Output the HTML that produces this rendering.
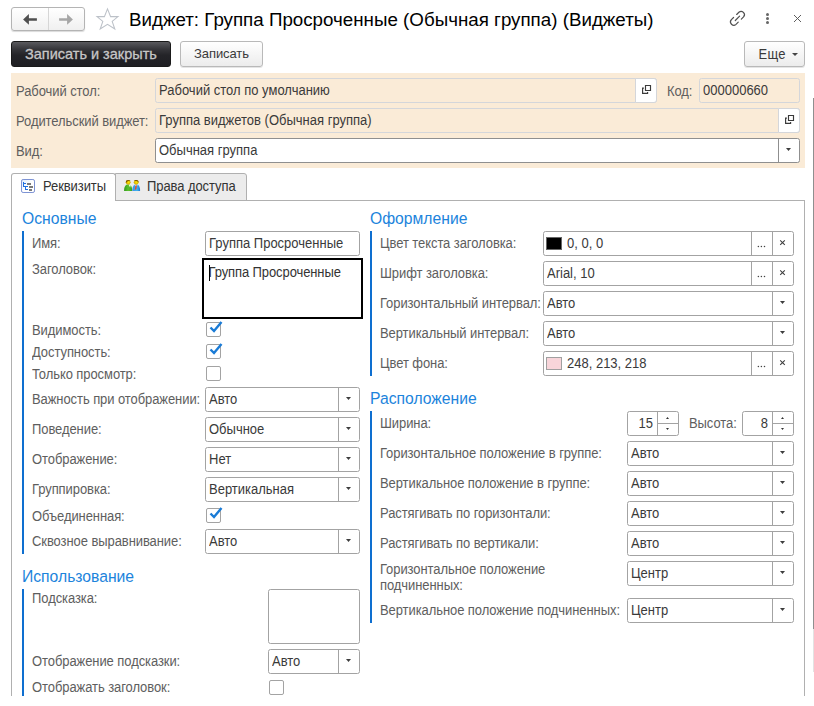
<!DOCTYPE html>
<html><head><meta charset="utf-8">
<style>
*{box-sizing:border-box;margin:0;padding:0}
html,body{width:814px;height:706px;overflow:hidden;background:#fff}
body{position:relative;font-family:"Liberation Sans",sans-serif;font-size:13px;color:#4d4d4d}
.a{position:absolute}
.t{position:absolute;white-space:nowrap;line-height:16px;letter-spacing:-0.08px;transform:scaleY(1.1);transform-origin:0 12.5px}
.lbl{color:#5e5e5e;margin-top:1px}
.fld{position:absolute;border:1px solid #a3a3a3;border-radius:2.5px;background:#fff;height:25px}
.fld .v{position:absolute;left:3px;top:4px;line-height:16px;color:#3a3a3a;white-space:nowrap;letter-spacing:0;transform:scaleY(1.1);transform-origin:0 12.5px}
.dd{position:absolute;top:-1px;bottom:-1px;right:-1px;width:22px;border-left:1px solid #a3a3a3}
.dd:after{content:"";position:absolute;left:7px;top:10px;width:5px;height:3px;background:#3d3d3d;clip-path:polygon(0 0,100% 0,50% 100%)}
.cb{position:absolute;width:15px;height:15px;border:1px solid #a3a3a3;border-radius:2px;background:#fff}
.cb svg{position:absolute;left:2px;top:-2px}
.hd{position:absolute;white-space:nowrap;font-size:15.7px;color:#1c84dc;line-height:18px;margin-top:1.7px;transform:scaleY(1.08);transform-origin:0 14.4px}
.bar{position:absolute;width:2px;background:#0e6fd0}
</style></head><body>

<!-- nav buttons -->
<div class="a" style="left:11px;top:7px;width:74px;height:24px;border:1px solid #b4b4b4;border-radius:3px;background:linear-gradient(#fff,#f0f0f0);box-shadow:0 1px 1px rgba(0,0,0,0.15)"></div>
<div class="a" style="left:48px;top:8px;width:1px;height:22px;background:#d6d6d6"></div>
<svg class="a" style="left:22px;top:13px" width="16" height="14" viewBox="0 0 16 14"><path d="M1.1 6.4 L6.9 1 L6.9 5.2 L14.9 5.2 L14.9 7.7 L6.9 7.7 L6.9 11.8 Z" fill="#4f4f4f"/></svg>
<svg class="a" style="left:58px;top:13px" width="16" height="14" viewBox="0 0 16 14"><path d="M14.9 6.4 L9.1 1 L9.1 5.2 L1.1 5.2 L1.1 7.7 L9.1 7.7 L9.1 11.8 Z" fill="#a6a6a6"/></svg>
<!-- star -->
<svg class="a" style="left:92px;top:4px" width="32" height="30" viewBox="92 4 32 30"><path d="M107.5 8.9 L110.6 16.6 L118.0 16.6 L112.2 21.4 L114.8 29 L107.5 24.4 L100.2 29 L102.8 21.4 L97.0 16.6 L104.4 16.6 Z" fill="none" stroke="#bcc1c8" stroke-width="1.05" stroke-linejoin="miter"/></svg>
<div class="t" style="left:129px;top:9px;font-size:18.75px;line-height:22px;color:#000;letter-spacing:0;transform:none">Виджет: Группа Просроченные (Обычная группа) (Виджеты)</div>
<!-- link icon -->
<svg class="a" style="left:726px;top:6px" width="24" height="24" viewBox="0 0 24 24"><g fill="none" stroke="#505050" stroke-width="1.2" stroke-linecap="round"><path d="M10.67 8.47 L12.87 6.27 A3.3 3.3 0 0 1 17.53 10.93 L15.33 13.13"/><path d="M12.23 16.13 L10.03 18.33 A3.3 3.3 0 0 1 5.37 13.67 L7.57 11.47"/><path d="M9.3 14.5 L13.6 10.2"/></g></svg>
<div class="a" style="left:766px;top:13px;width:3px;height:3px;border-radius:2px;background:#666"></div>
<div class="a" style="left:766px;top:17px;width:3px;height:3px;border-radius:2px;background:#666"></div>
<div class="a" style="left:766px;top:21px;width:3px;height:3px;border-radius:2px;background:#666"></div>
<svg class="a" style="left:793px;top:14px" width="9" height="9" viewBox="0 0 9 9"><path d="M1 1 L8 8 M8 1 L1 8" stroke="#555" stroke-width="0.95"/></svg>

<!-- toolbar -->
<div class="a" style="left:11px;top:41px;width:160px;height:26px;border:1px solid #1a1a1a;border-radius:3px;background:linear-gradient(#5a5a5e,#36363a 30%,#242428 55%,#1f1f23)"></div>
<div class="t" style="left:25px;top:46px;font-size:14.5px;color:#c6c6c6;letter-spacing:0;-webkit-text-stroke:0.3px #c6c6c6;transform:none;top:46px">Записать и закрыть</div>
<div class="a" style="left:180px;top:41px;width:83px;height:26px;border:1px solid #b9b9b9;border-radius:3px;background:linear-gradient(#fff,#ececec);box-shadow:0 1px 0 rgba(0,0,0,0.1)"></div>
<div class="t" style="left:194px;top:46px;color:#3a3a3a;transform:none">Записать</div>
<div class="a" style="left:744px;top:41px;width:61px;height:26px;border:1px solid #b9b9b9;border-radius:3px;background:linear-gradient(#fff,#ececec);box-shadow:0 1px 0 rgba(0,0,0,0.1)"></div>
<div class="t" style="left:758.5px;top:46.5px;color:#3a3a3a;letter-spacing:0.3px">Еще</div>
<div class="a" style="left:792px;top:53px;border-left:3px solid transparent;border-right:3px solid transparent;border-top:3px solid #444"></div>

<!-- header panel -->
<div class="a" style="left:11px;top:73px;width:794px;height:95px;background:#faebd7"></div>
<div class="t lbl" style="left:16px;top:83px">Рабочий стол:</div>
<div class="fld" style="left:155px;top:78px;width:502px;background:#faebd7;border-color:#d4d6da"><div class="v">Рабочий стол по умолчанию</div>
  <div class="a" style="right:-1px;top:-1px;bottom:-1px;width:22px;background:#fff;border:1px solid #d4d6da;border-radius:0 3px 3px 0"></div></div>
<svg class="a" style="left:641px;top:84px" width="12" height="12" viewBox="0 0 12 12"><g fill="none" stroke="#3a3a3a" stroke-width="1.15"><path d="M4.5 1.5 H9.5 V6.5 H4.5 Z"/><path d="M2.9 4.1 H1.6 V9.4 H6.6 V8.1"/></g></svg>
<div class="t lbl" style="left:667px;top:83px">Код:</div>
<div class="fld" style="left:699px;top:78px;width:101px;background:#faebd7;border-color:#d4d6da"><div class="v">000000660</div></div>

<div class="t lbl" style="left:16px;top:113px">Родительский виджет:</div>
<div class="fld" style="left:155px;top:108px;width:645px;background:#faebd7;border-color:#d4d6da"><div class="v">Группа виджетов (Обычная группа)</div>
  <div class="a" style="right:-1px;top:-1px;bottom:-1px;width:22px;background:#fff;border:1px solid #d4d6da;border-radius:0 3px 3px 0"></div></div>
<svg class="a" style="left:784px;top:114px" width="12" height="12" viewBox="0 0 12 12"><g fill="none" stroke="#3a3a3a" stroke-width="1.15"><path d="M4.5 1.5 H9.5 V6.5 H4.5 Z"/><path d="M2.9 4.1 H1.6 V9.4 H6.6 V8.1"/></g></svg>

<div class="t lbl" style="left:16px;top:143px">Вид:</div>
<div class="fld" style="left:155px;top:138px;width:645px;border-color:#8f8f8f"><div class="v">Обычная группа</div><div class="dd" style="border-color:#8f8f8f"></div></div>

<!-- tabs -->
<div class="a" style="left:115px;top:173px;width:132px;height:28px;background:#ececec;border:1px solid #b0b0b0;border-radius:0 3px 0 0"></div>
<div class="a" style="left:11px;top:200px;width:794px;height:496px;border:1px solid #b0b0b0;border-bottom:none"></div>
<div class="a" style="left:11px;top:173px;width:105px;height:28px;background:#fff;border:1px solid #b0b0b0;border-bottom:none;border-radius:3px 3px 0 0"></div>
<svg class="a" style="left:18px;top:176px" width="20" height="20" viewBox="18 176 20 20"><defs><linearGradient id="g1" x1="0" y1="0" x2="1" y2="1"><stop offset="0" stop-color="#dce9fb"/><stop offset="0.5" stop-color="#fff"/></linearGradient></defs><rect x="21.5" y="179.5" width="13" height="13" rx="1.6" fill="url(#g1)" stroke="#7d93d4"/><g fill="#1f6fe0"><rect x="23" y="182" width="1" height="5"/><rect x="23" y="183" width="3" height="1"/><rect x="23" y="186" width="5" height="1"/><rect x="25" y="186" width="1" height="4"/><rect x="25" y="189" width="3" height="1"/></g><g fill="#7a7a7a"><rect x="27" y="183" width="4" height="2"/><rect x="29" y="186" width="4" height="2"/><rect x="29" y="189" width="3" height="2"/></g></svg>
<div class="t" style="left:43px;top:179px;color:#333">Реквизиты</div>
<svg class="a" style="left:120px;top:176px" width="24" height="20" viewBox="120 176 24 20"><defs><linearGradient id="gg" x1="0" y1="0" x2="1" y2="0"><stop offset="0" stop-color="#2f9a1c"/><stop offset="0.5" stop-color="#5cc02e"/><stop offset="1" stop-color="#3aa020"/></linearGradient><linearGradient id="gb" x1="0" y1="0" x2="1" y2="0"><stop offset="0" stop-color="#3a8fe8"/><stop offset="0.6" stop-color="#3fb6ee"/><stop offset="1" stop-color="#1f6fd6"/></linearGradient><radialGradient id="gh" cx="0.55" cy="0.5" r="0.6"><stop offset="0" stop-color="#ffe800"/><stop offset="1" stop-color="#c99a00"/></radialGradient></defs>
<path d="M124.1 191 C123.9 186.4 125.8 184.5 128.2 184.5 C130.6 184.5 132.3 186.4 132.2 191 Z" fill="url(#gg)"/><path d="M128.6 184.8 L130.8 184.8 L130.1 187.6 Z" fill="#efffd8"/>
<path d="M132.3 191 C132.2 186.4 133.9 184.5 136.2 184.5 C138.5 184.5 140.2 186.4 140.1 191 Z" fill="url(#gb)"/><path d="M134.4 184.7 L138 184.7 L136.2 186.6 Z" fill="#eaf6ff"/><path d="M135.7 185.2 L136.9 185.3 L136.3 189 L134.8 190 Z" fill="#ff3c12"/>
<circle cx="128.2" cy="182.3" r="2.4" fill="url(#gh)"/><path d="M125.9 182.5 C125.6 180.5 127 179.9 128.4 179.9 C129.6 179.9 130.5 180.5 130.6 181 C129.5 180.7 127.2 180.8 126.4 182.8 Z" fill="#7a5200"/>
<circle cx="136.2" cy="182.3" r="2.4" fill="url(#gh)"/><path d="M134 181 C134.5 180.2 135.5 179.9 136.4 179.9 C137.8 179.9 138.8 180.8 138.6 182.6 C138.1 181.2 137 180.7 134 181 Z" fill="#7a5200"/></svg>
<div class="t" style="left:147px;top:179px;color:#333">Права доступа</div>

<!-- ОСНОВНЫЕ -->
<div class="hd" style="left:22px;top:208px">Основные</div>
<div class="bar" style="left:22px;top:231px;height:323px"></div>
<div class="t lbl" style="left:32px;top:235px">Имя:</div>
<div class="fld" style="left:205px;top:231px;width:155px;height:25px"><div class="v">Группа Просроченные</div></div>
<div class="t lbl" style="left:32px;top:261px">Заголовок:</div>
<div class="a" style="left:202px;top:258px;width:161px;height:61px;border:2px solid #000"></div>
<div class="t" style="left:208.5px;top:265px;color:#333;letter-spacing:-0.1px">Группа Просроченные</div>
<div class="a" style="left:209px;top:265px;width:1px;height:16px;background:#000"></div>

<div class="t lbl" style="left:32px;top:322px">Видимость:</div>
<div class="cb" style="left:206px;top:322px"><svg width="14" height="13" viewBox="0 0 14 13"><path d="M1.5 6.5 L5 10 L12.5 1" fill="none" stroke="#1a7bd6" stroke-width="2.4"/></svg></div>
<div class="t lbl" style="left:32px;top:344px">Доступность:</div>
<div class="cb" style="left:206px;top:344px"><svg width="14" height="13" viewBox="0 0 14 13"><path d="M1.5 6.5 L5 10 L12.5 1" fill="none" stroke="#1a7bd6" stroke-width="2.4"/></svg></div>
<div class="t lbl" style="left:32px;top:366px">Только просмотр:</div>
<div class="cb" style="left:206px;top:366px"></div>

<div class="t lbl" style="left:32px;top:391px">Важность при отображении:</div>
<div class="fld" style="left:205px;top:387px;width:155px"><div class="v">Авто</div><div class="dd"></div></div>
<div class="t lbl" style="left:32px;top:421px">Поведение:</div>
<div class="fld" style="left:205px;top:417px;width:155px"><div class="v">Обычное</div><div class="dd"></div></div>
<div class="t lbl" style="left:32px;top:451px">Отображение:</div>
<div class="fld" style="left:205px;top:447px;width:155px"><div class="v">Нет</div><div class="dd"></div></div>
<div class="t lbl" style="left:32px;top:481px">Группировка:</div>
<div class="fld" style="left:205px;top:477px;width:155px"><div class="v">Вертикальная</div><div class="dd"></div></div>
<div class="t lbl" style="left:32px;top:508px">Объединенная:</div>
<div class="cb" style="left:206px;top:508px"><svg width="14" height="13" viewBox="0 0 14 13"><path d="M1.5 6.5 L5 10 L12.5 1" fill="none" stroke="#1a7bd6" stroke-width="2.4"/></svg></div>
<div class="t lbl" style="left:32px;top:533px">Сквозное выравнивание:</div>
<div class="fld" style="left:205px;top:529px;width:155px"><div class="v">Авто</div><div class="dd"></div></div>

<!-- ИСПОЛЬЗОВАНИЕ -->
<div class="hd" style="left:22px;top:566px">Использование</div>
<div class="bar" style="left:22px;top:589px;height:107px"></div>
<div class="t lbl" style="left:32px;top:590px">Подсказка:</div>
<div class="fld" style="left:268px;top:589px;width:92px;height:55px"></div>
<div class="t lbl" style="left:32px;top:653px">Отображение подсказки:</div>
<div class="fld" style="left:268px;top:649px;width:92px"><div class="v">Авто</div><div class="dd"></div></div>
<div class="t lbl" style="left:32px;top:679px">Отображать заголовок:</div>
<div class="cb" style="left:269px;top:680px"></div>

<!-- ОФОРМЛЕНИЕ -->
<div class="hd" style="left:370px;top:208px">Оформление</div>
<div class="bar" style="left:370px;top:231px;height:145px"></div>
<div class="t lbl" style="left:380px;top:235px">Цвет текста заголовка:</div>
<div class="fld" style="left:543px;top:231px;width:251px"><div class="a" style="left:2px;top:5px;width:16px;height:13px;background:#000;border:1px solid #666"></div><div class="v" style="left:23px">0, 0, 0</div>
  <div class="a" style="left:207px;top:-1px;width:1px;height:25px;background:#a3a3a3"></div><svg class="a" style="left:212px;top:12px" width="10" height="4" viewBox="0 0 10 4"><g fill="#444"><circle cx="2.4" cy="2.4" r="0.75"/><circle cx="5.4" cy="2.4" r="0.75"/><circle cx="8.5" cy="2.4" r="0.75"/></g></svg>
  <div class="a" style="left:228px;top:-1px;width:1px;height:25px;background:#a3a3a3"></div></div>
<div class="t lbl" style="left:380px;top:265px">Шрифт заголовка:</div>
<div class="fld" style="left:543px;top:261px;width:251px"><div class="v">Arial, 10</div>
  <div class="a" style="left:207px;top:-1px;width:1px;height:25px;background:#a3a3a3"></div><svg class="a" style="left:212px;top:12px" width="10" height="4" viewBox="0 0 10 4"><g fill="#444"><circle cx="2.4" cy="2.4" r="0.75"/><circle cx="5.4" cy="2.4" r="0.75"/><circle cx="8.5" cy="2.4" r="0.75"/></g></svg>
  <div class="a" style="left:228px;top:-1px;width:1px;height:25px;background:#a3a3a3"></div></div>
<div class="t lbl" style="left:380px;top:295px">Горизонтальный интервал:</div>
<div class="fld" style="left:543px;top:291px;width:251px"><div class="v">Авто</div><div class="dd"></div></div>
<div class="t lbl" style="left:380px;top:325px">Вертикальный интервал:</div>
<div class="fld" style="left:543px;top:321px;width:251px"><div class="v">Авто</div><div class="dd"></div></div>
<div class="t lbl" style="left:380px;top:355px">Цвет фона:</div>
<div class="fld" style="left:543px;top:351px;width:251px"><div class="a" style="left:2px;top:5px;width:16px;height:13px;background:#f8d5da;border:1px solid #a0a0a0"></div><div class="v" style="left:23px">248, 213, 218</div>
  <div class="a" style="left:207px;top:-1px;width:1px;height:25px;background:#a3a3a3"></div><svg class="a" style="left:212px;top:12px" width="10" height="4" viewBox="0 0 10 4"><g fill="#444"><circle cx="2.4" cy="2.4" r="0.75"/><circle cx="5.4" cy="2.4" r="0.75"/><circle cx="8.5" cy="2.4" r="0.75"/></g></svg>
  <div class="a" style="left:228px;top:-1px;width:1px;height:25px;background:#a3a3a3"></div></div>
<svg class="a" style="left:779px;top:239px" width="8" height="8" viewBox="0 0 8 8"><path d="M1.2 1.3 L5.8 5.9 M5.8 1.3 L1.2 5.9" stroke="#3d3d3d" stroke-width="1.05"/></svg>
<svg class="a" style="left:779px;top:269px" width="8" height="8" viewBox="0 0 8 8"><path d="M1.2 1.3 L5.8 5.9 M5.8 1.3 L1.2 5.9" stroke="#3d3d3d" stroke-width="1.05"/></svg>
<svg class="a" style="left:779px;top:359px" width="8" height="8" viewBox="0 0 8 8"><path d="M1.2 1.3 L5.8 5.9 M5.8 1.3 L1.2 5.9" stroke="#3d3d3d" stroke-width="1.05"/></svg>

<!-- РАСПОЛОЖЕНИЕ -->
<div class="hd" style="left:370px;top:388px">Расположение</div>
<div class="bar" style="left:370px;top:411px;height:212px"></div>
<div class="t lbl" style="left:380px;top:415px">Ширина:</div>
<div class="fld" style="left:627px;top:411px;width:52px"><div class="v" style="left:auto;right:25px">15</div>
  <div class="a" style="left:29px;top:-1px;width:1px;height:25px;background:#a3a3a3"></div><div class="a" style="left:30px;top:11px;width:21px;height:1px;background:#a3a3a3"></div>
  <div class="a" style="left:38px;top:5px;width:3px;height:2px;background:#333;clip-path:polygon(50% 0,100% 100%,0 100%)"></div>
  <div class="a" style="left:38px;top:16px;width:3px;height:2px;background:#333;clip-path:polygon(0 0,100% 0,50% 100%)"></div></div>
<div class="t lbl" style="left:689px;top:415px">Высота:</div>
<div class="fld" style="left:742px;top:411px;width:52px"><div class="v" style="left:auto;right:25px">8</div>
  <div class="a" style="left:29px;top:-1px;width:1px;height:25px;background:#a3a3a3"></div><div class="a" style="left:30px;top:11px;width:21px;height:1px;background:#a3a3a3"></div>
  <div class="a" style="left:38px;top:5px;width:3px;height:2px;background:#333;clip-path:polygon(50% 0,100% 100%,0 100%)"></div>
  <div class="a" style="left:38px;top:16px;width:3px;height:2px;background:#333;clip-path:polygon(0 0,100% 0,50% 100%)"></div></div>
<div class="t lbl" style="left:380px;top:445px">Горизонтальное положение в группе:</div>
<div class="fld" style="left:627px;top:441px;width:167px"><div class="v">Авто</div><div class="dd"></div></div>
<div class="t lbl" style="left:380px;top:475px">Вертикальное положение в группе:</div>
<div class="fld" style="left:627px;top:471px;width:167px"><div class="v">Авто</div><div class="dd"></div></div>
<div class="t lbl" style="left:380px;top:505px">Растягивать по горизонтали:</div>
<div class="fld" style="left:627px;top:501px;width:167px"><div class="v">Авто</div><div class="dd"></div></div>
<div class="t lbl" style="left:380px;top:535px">Растягивать по вертикали:</div>
<div class="fld" style="left:627px;top:531px;width:167px"><div class="v">Авто</div><div class="dd"></div></div>
<div class="t lbl" style="left:380px;top:561px">Горизонтальное положение</div>
<div class="t lbl" style="left:380px;top:577px">подчиненных:</div>
<div class="fld" style="left:627px;top:561px;width:167px"><div class="v">Центр</div><div class="dd"></div></div>
<div class="t lbl" style="left:380px;top:602px">Вертикальное положение подчиненных:</div>
<div class="fld" style="left:627px;top:598px;width:167px"><div class="v">Центр</div><div class="dd"></div></div>

<!-- scrollbar -->
<div class="a" style="left:813px;top:98px;width:1px;height:531px;background:#8f8f8f"></div>
<div class="a" style="left:813px;top:629px;width:1px;height:43px;background:#e3e3e3"></div>
</body></html>
